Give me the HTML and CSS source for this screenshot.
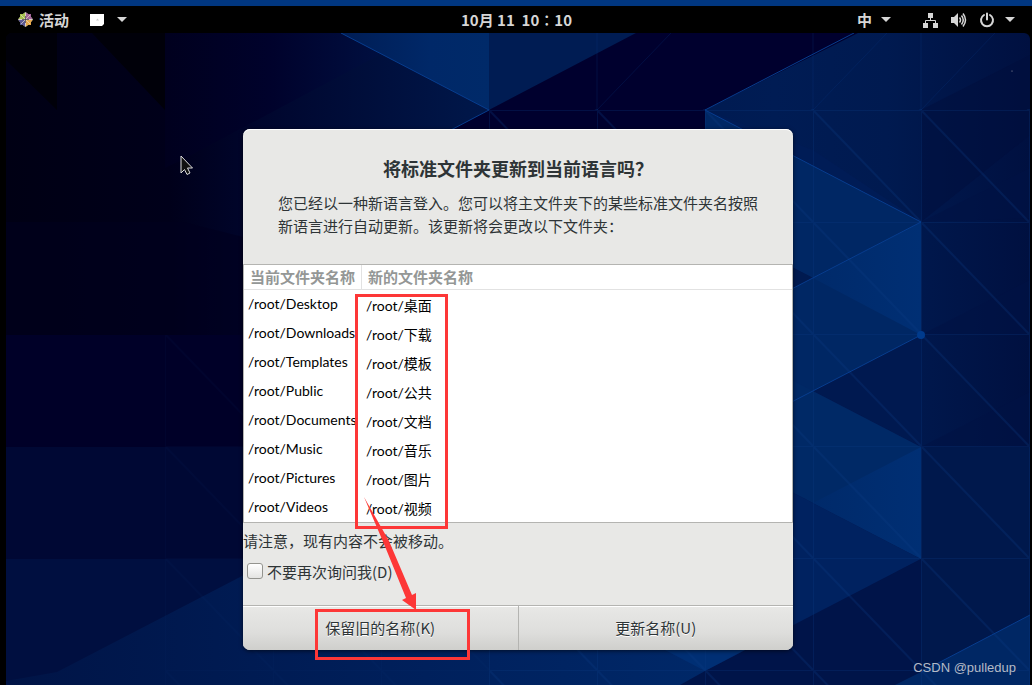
FILE: index.html
```
<!DOCTYPE html>
<html lang="zh-CN">
<head>
    <meta charset="UTF-8">
    <meta name="viewport" content="width=device-width, initial-scale=1.0">
    <title>更新标准文件夹</title>
    <link rel="stylesheet" href="styles.css">
</head>
<body>
    <!-- Top panel -->
    <header class="panel">
        <div class="panel-group">
            <button class="panel-item" type="button">
                <svg class="logo" width="15" height="15" viewBox="0 0 15 15">
                    <path fill="#d8cfc4" d="M7.500 0 10 2h3v3l2 2.500-2 2.500v3h-3l-2.500 2L5 13H2v-3L0 7.500 2 5V2h3z"/>
                    <path fill="#a6c24e" d="M2 2h3l2-1.500V7H.5L2 5z"/>
                    <path fill="#a3669a" d="M13 2v3l1.500 2H8V.5L10 2z"/>
                    <path fill="#e5a94d" d="M13 13h-3l-2 1.500V8h6.500L13 10z"/>
                    <path fill="#5a5794" d="M2 13v-3L.5 8H7v6.500L5 13z"/>
                    <path fill="none" stroke="#e4dccb" stroke-width="0.700" d="m3 3 9 9M12 3l-9 9"/>
                    <path stroke="#3c3444" stroke-width="0.700" d="M7.500 4v7M4 7.500h7"/>
                </svg>
                活动
            </button>
            <button class="panel-item" type="button" aria-label="窗口">
                <svg width="14" height="12" viewBox="0 0 14 12"><path fill="#fff" d="M0 0h14v10l-2 2H0z"/><path fill="#ccc" d="M6 6.500 7.500 4.500 9 6.500z"/></svg>
                <svg class="arrow" width="10" height="5" viewBox="0 0 10 5"><path d="M0 0h10L5 5z"/></svg>
            </button>
        </div>
        <time class="clock">10月 11&nbsp; 10∶10</time>
        <div class="panel-group panel-right">
            <button class="panel-item input-source" type="button">
                中
                <svg class="arrow" width="10" height="5" viewBox="0 0 10 5"><path d="M0 0h10L5 5z"/></svg>
            </button>
            <button class="panel-item system" type="button" aria-label="系统">
                <svg width="16" height="16" viewBox="0 0 16 16"><path fill="#d6d6d6" d="M5 1h5v5H5zM0 11h5v5H0zM10 11h5v5h-5z"/><path fill="none" stroke="#d6d6d6" d="M7.500 6v2.500M2.500 11V8.500h10V11"/></svg>
                <svg width="16" height="16" viewBox="0 0 16 16"><path fill="#d6d6d6" d="M0 5h3l4-4v14l-4-4H0z"/><path fill="none" stroke="#d6d6d6" stroke-width="1.500" d="M8.500 5.500q2 2.500 0 5M10.500 3.500q3.500 4.500 0 9M12 1.500q5 6.500 0 13"/></svg>
                <svg width="16" height="16" viewBox="0 0 16 16"><path fill="none" stroke="#d6d6d6" stroke-width="2" stroke-linecap="round" d="M8 1.500v6M5 3a6 6 0 1 0 6 0"/></svg>
                <svg class="arrow" width="10" height="5" viewBox="0 0 10 5"><path d="M0 0h10L5 5z"/></svg>
            </button>
        </div>
    </header>

    <main class="desktop">
        <!-- Wallpaper -->
        <svg class="wallpaper" viewBox="6 33 1024 652" preserveAspectRatio="xMidYMin slice" aria-hidden="true">
            <defs>
                <linearGradient id="base" x1="0" y1="0" x2="1" y2="0">
                    <stop offset="0" stop-color="#000014"/>
                    <stop offset="0.16" stop-color="#00001a"/>
                    <stop offset="0.24" stop-color="#00052c"/>
                    <stop offset="0.45" stop-color="#001648"/>
                    <stop offset="0.75" stop-color="#001c54"/>
                    <stop offset="0.86" stop-color="#001a50"/>
                    <stop offset="1" stop-color="#001040"/>
                </linearGradient>
                <linearGradient id="floor" x1="0" y1="0" x2="1" y2="0">
                    <stop offset="0" stop-color="#001446"/>
                    <stop offset="0.6" stop-color="#00205c"/>
                    <stop offset="1" stop-color="#002868"/>
                </linearGradient>
                <linearGradient id="peak" x1="0" y1="0" x2="1" y2="0">
                    <stop offset="0" stop-color="#001d55"/>
                    <stop offset="0.6" stop-color="#002868"/>
                    <stop offset="1" stop-color="#002a69"/>
                </linearGradient>
                <linearGradient id="facet" x1="0" y1="0" x2="1" y2="0">
                    <stop offset="0" stop-color="#002a6a"/>
                    <stop offset="1" stop-color="#002f74"/>
                </linearGradient>
                <linearGradient id="dusk" x1="0" y1="0" x2="1" y2="0">
                    <stop offset="0" stop-color="#00001e"/>
                    <stop offset="0.5" stop-color="#00022c"/>
                    <stop offset="1" stop-color="#000f40"/>
                </linearGradient>
                <pattern id="grid" x="57" y="-2" width="108" height="112" patternUnits="userSpaceOnUse">
                    <path d="M0 0H108M0 0V112M0 0L108 112" fill="none" stroke="#0a3c85" stroke-width="2"/>
                </pattern>
            </defs>
            <rect x="6" y="33" width="1024" height="652" fill="url(#base)"/>
            <path fill="#000009" d="M6 33h51v77L6 60zM92 33h73v77z"/>
            <path fill="url(#dusk)" d="M165 33H341l40 21-199 106-17 8z"/>
            <path fill="#00001e" d="M6 222h177l60 15v98H6z" opacity="0.6"/>
            <path fill="#000028" d="M6 335h483v112H6z"/>
            <path fill="#000834" d="M6 447h483v112H6z"/>
            <path fill="#000f40" d="M6 559h483v126H6z"/>
            <path fill="url(#floor)" d="M57 672 273 560h432v125H6v-4z"/>
            <path fill="url(#peak)" d="M341 33h148v77z"/>
            <path fill="#001c53" d="M489 33h147l-147 77z"/>
            <path fill="#00002e" d="M636 33h222l-153 77 60 31H430l59-31z"/>
            <path fill="#000e3c" d="M1030 55v80l-109 87V110z" opacity="0.5"/>
            <path fill="#001c56" d="M705 110 921 222 813 150z"/>
            <path fill="#002764" d="M705 110 921 222 813 278 705 222z"/>
            <path fill="#002764" d="M921 222V335L705 447V334z"/>
            <path fill="#001a50" d="M780 261 813 278 780 295z"/>
            <path fill="url(#facet)" d="M921 222V335L813 278z"/>
            <path fill="#001950" d="M921 335V447L813 391z"/>
            <path fill="#002966" d="M780 374 921 447V559L780 486z"/>
            <path fill="url(#facet)" d="M921 447V559L813 503z"/>
            <path fill="#002260" d="M780 486 921 559 780 632z"/>
            <path fill="#001449" d="M921 559V672L895 685H680l25-14z"/>
            <path fill="#002f74" d="M665 650h80l-40 21z"/>
            <path fill="#001345" d="M1030 168v50l-109 4zM1030 280v55h-109zM1030 392v55H921z" opacity="0.6"/>
            <path fill="#00184c" d="M921 447h109v168l-109 57z"/>
            <path fill="#002764" d="M1030 615v70H895l26-13z"/>
            <path fill="none" stroke="#0a3c85" opacity="0.24" d="M597 33v77l74-77M813 33v77l74-77M921 33v77l74-77"/>
            <rect x="489" y="109" width="541" height="576" fill="url(#grid)" opacity="0.26"/>
            <rect x="165" y="335" width="324" height="350" fill="url(#grid)" opacity="0.06"/>
            <path class="edge" d="M341 33 489 110 430 141M854 33 705 110 921 222 780 295M921 335 780 408M1030 615 921 672"/>
            <circle cx="921" cy="335" r="4" fill="#003b8d"/>
            <circle cx="1012" cy="71" r="0.500" fill="#bbb"/>
        </svg>

        <svg class="pointer" width="14" height="21" viewBox="0 0 14 21" aria-hidden="true">
            <path fill="#111" stroke="#ddd" d="M1 1v17l3.500-3.500L7 19.500l3-1.500-2.500-5h5z"/>
        </svg>

        <!-- Folder update dialog -->
        <section class="dialog" role="dialog" aria-labelledby="dialog-title">
            <div class="message">
                <h1 id="dialog-title">将标准文件夹更新到当前语言吗？</h1>
                <p>您已经以一种新语言登入。您可以将主文件夹下的某些标准文件夹名按照新语言进行自动更新。该更新将会更改以下文件夹：</p>
            </div>
            <table class="folders">
                <thead>
                    <tr><th>当前文件夹名称</th><th>新的文件夹名称</th></tr>
                </thead>
                <tbody>
                    <tr><td>/root/Desktop</td><td>/root/桌面</td></tr>
                    <tr><td>/root/Downloads</td><td>/root/下载</td></tr>
                    <tr><td>/root/Templates</td><td>/root/模板</td></tr>
                    <tr><td>/root/Public</td><td>/root/公共</td></tr>
                    <tr><td>/root/Documents</td><td>/root/文档</td></tr>
                    <tr><td>/root/Music</td><td>/root/音乐</td></tr>
                    <tr><td>/root/Pictures</td><td>/root/图片</td></tr>
                    <tr><td>/root/Videos</td><td>/root/视频</td></tr>
                </tbody>
            </table>
            <div class="options">
                <p>请注意，现有内容不会被移动。</p>
                <label class="ask" for="no-ask">
                    <input type="checkbox" id="no-ask">
                    不要再次询问我(D)
                </label>
            </div>
            <div class="actions">
                <button type="button">保留旧的名称(K)</button>
                <button type="button">更新名称(U)</button>
            </div>

            <!-- Red marks over the dialog -->
            <svg class="marks" width="160" height="370" viewBox="0 0 160 370" aria-hidden="true">
                <path fill="none" stroke="#fd3737" stroke-width="3" d="M42.500 2.500h90v232h-90zM2.500 317.500h152v48H2.500z"/>
                <path fill="#fd3737" d="M50 204 75 248 98 302l4-2v17l-14-10 4-2-22-54z"/>
            </svg>
        </section>

        <div class="watermark">CSDN @pulledup</div>
    </main>
</body>
</html>
```
FILE: styles.css
```
:root {
    --dialog: #e8e8e6;
    --text: #2e3436;
    --border: #b4b4b1;
    --panel-text: #d6d6d6;
}

* {
    box-sizing: border-box;
}

body {
    margin: 0;
    min-height: 100vh;
    display: flex;
    flex-direction: column;
    background-color: #000;
    color: var(--text);
    font-family: "Noto Sans CJK SC", sans-serif;
    font-size: 15px;
    line-height: 23px;
}

button {
    margin: 0;
    padding: 0;
    border: none;
    background: none;
    color: inherit;
    font: inherit;
}

/* Top panel */
.panel {
    display: grid;
    grid-template-columns: 1fr auto 1fr;
    align-items: center;
    height: 33px;
    padding: 0 17px 0 18px;
    border-top: 6px solid #003680;
    color: var(--panel-text);
    font-weight: bold;
}

.panel-group {
    display: flex;
    gap: 21px;
}

.panel-right {
    justify-content: flex-end;
    gap: 32px;
}

.panel-item {
    display: flex;
    align-items: center;
    gap: 6px;
}

.panel-item + .panel-item {
    gap: 13px;
}

.input-source {
    gap: 9px;
}

.panel-right .system {
    gap: 12px;
}

.arrow {
    fill: var(--panel-text);
}

.system .arrow {
    margin-left: -2px;
}

/* Desktop */
.desktop {
    position: relative;
    flex: 1;
    display: flex;
    justify-content: center;
    align-items: flex-start;
    margin: 0 2px 0 6px;
    padding: 96px 0 34px;
    border-radius: 6px 6px 0 0;
    overflow: hidden;
}

.wallpaper {
    position: absolute;
    top: 0;
    left: 0;
    width: 100%;
    height: 100%;
}

.edge {
    fill: none;
    stroke: #073d8e;
    stroke-width: 1;
}

.pointer {
    position: absolute;
    top: 122px;
    left: 174px;
}

.watermark {
    position: absolute;
    right: 14px;
    bottom: 6px;
    color: #b4bac6;
    font-family: "Liberation Sans", Arial, sans-serif;
    font-size: 13px;
}

/* Dialog */
.dialog {
    position: relative;
    width: 550px;
    border-radius: 7px;
    background-color: var(--dialog);
    box-shadow: 0 1px 4px rgba(0, 0, 0, 0.6), inset 0 1px #fff;
}

.message {
    padding: 27px 35px 27px;
}

.message h1 {
    margin: 0 0 11px;
    font-size: 18px;
    line-height: 24px;
    text-align: center;
}

.message p,
.options p {
    margin: 0;
}

.folders {
    width: 100%;
    border: 1px solid var(--border);
    border-collapse: separate;
    border-spacing: 0;
    background-color: #fff;
    table-layout: fixed;
}

.folders th {
    height: 25px;
    padding: 0 6px 1px;
    border-bottom: 1px solid #e2e2e2;
    color: #949796;
    text-align: left;
}

.folders th:first-child {
    width: 118px;
    border-right: 1px solid #e2e2e2;
}

.folders td {
    height: 29px;
    padding: 4px 4px 2px;
    color: #000;
    font-family: Lato, "Noto Sans CJK SC", sans-serif;
    font-size: 14px;
    white-space: nowrap;
}

.folders td:first-child {
    padding: 2px 4px 4px;
}

.options {
    padding: 6px 0 22px;
}

.ask {
    display: flex;
    align-items: center;
    gap: 4px;
    margin-top: 8px;
    padding-left: 4px;
}

.ask input {
    appearance: none;
    width: 16px;
    height: 16px;
    margin: 0 0 2px;
    border: 1px solid #94948f;
    border-radius: 3px;
    background: linear-gradient(#fff, #e4e4e2);
}

.actions {
    display: flex;
    border-top: 1px solid var(--border);
}

.actions button {
    flex: 1;
    height: 44px;
    padding-bottom: 2px;
    background: linear-gradient(#e8e8e6, #dededc 60%, #cfcfcc);
    box-shadow: inset 0 1px #fff;
    text-shadow: 0 1px #fff;
}

.actions button:first-child {
    border-right: 1px solid var(--border);
    border-radius: 0 0 0 7px;
}

.actions button:last-child {
    border-radius: 0 0 7px 0;
}

.marks {
    position: absolute;
    top: 164px;
    left: 71px;
    pointer-events: none;
}
```
